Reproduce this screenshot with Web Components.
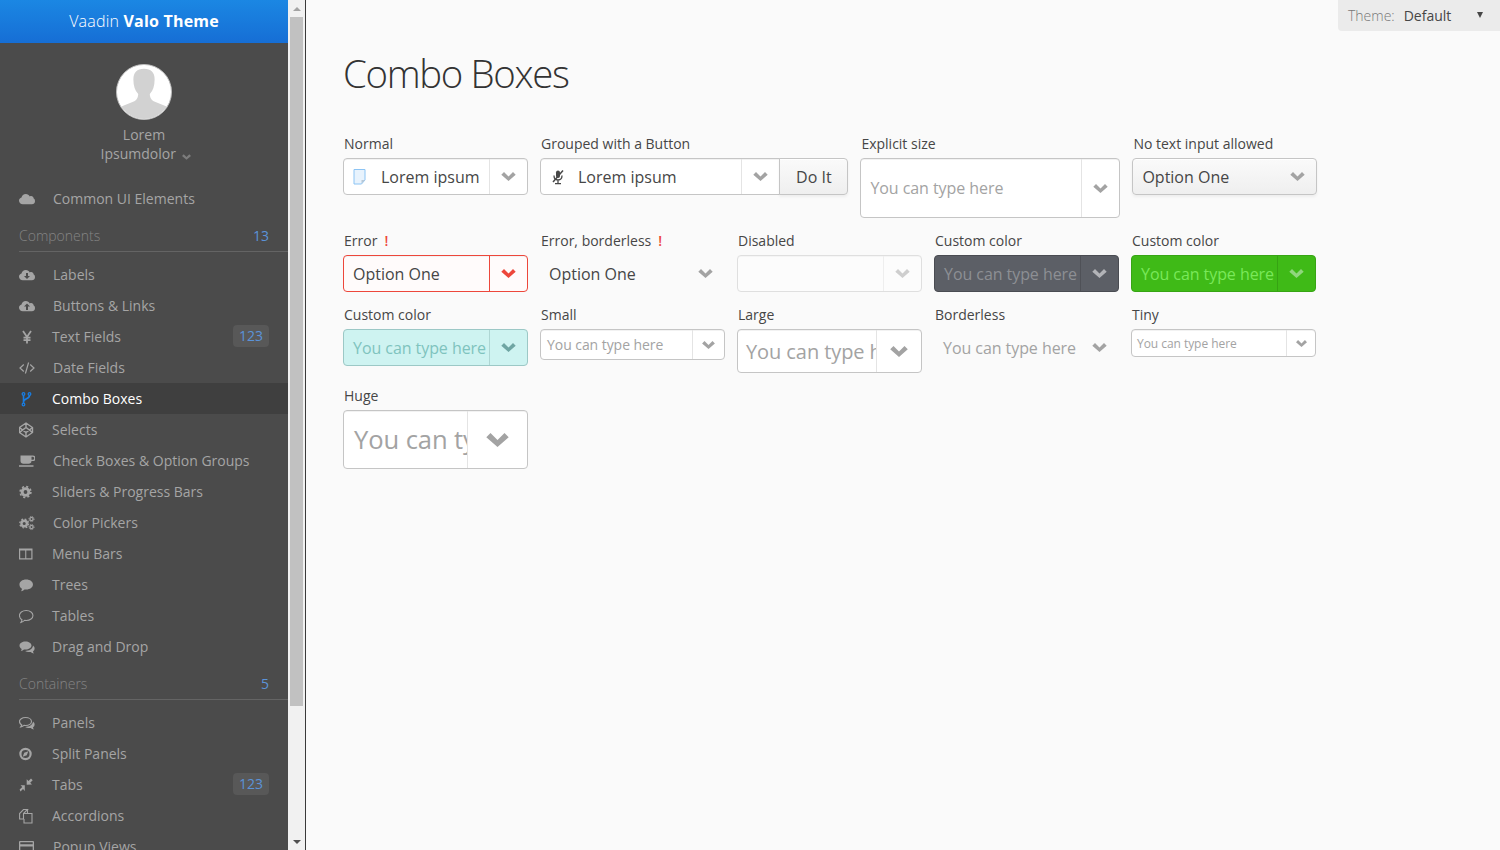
<!DOCTYPE html>
<html>
<head>
<meta charset="utf-8">
<title>Combo Boxes</title>
<style>
  html, body { margin: 0; height: 100%; overflow: hidden; }
  body { font-family: "Open Sans", sans-serif; background: #fafafa; color: #464646; }
</style>
</head>
<body>
<valo-app>
  <valo-menu slot="menu">
    <menu-item icon="cloud">Common UI Elements</menu-item>
    <menu-section count="13">Components</menu-section>
    <menu-item icon="cloud-download">Labels</menu-item>
    <menu-item icon="cloud-upload">Buttons &amp; Links</menu-item>
    <menu-item icon="yen" narrow badge="123">Text Fields</menu-item>
    <menu-item icon="code">Date Fields</menu-item>
    <menu-item icon="fork" narrow selected>Combo Boxes</menu-item>
    <menu-item icon="codepen" narrow>Selects</menu-item>
    <menu-item icon="coffee">Check Boxes &amp; Option Groups</menu-item>
    <menu-item icon="cog" narrow>Sliders &amp; Progress Bars</menu-item>
    <menu-item icon="cogs">Color Pickers</menu-item>
    <menu-item icon="columns" narrow>Menu Bars</menu-item>
    <menu-item icon="comment" narrow>Trees</menu-item>
    <menu-item icon="comment-o" narrow>Tables</menu-item>
    <menu-item icon="comments" narrow>Drag and Drop</menu-item>
    <menu-section count="5">Containers</menu-section>
    <menu-item icon="comments-o" narrow>Panels</menu-item>
    <menu-item icon="compass" narrow>Split Panels</menu-item>
    <menu-item icon="compress" narrow badge="123">Tabs</menu-item>
    <menu-item icon="copy" narrow>Accordions</menu-item>
    <menu-item icon="card">Popup Views</menu-item>
  </valo-menu>
  <fake-scrollbar slot="menu"></fake-scrollbar>
  <theme-select></theme-select>
  <h1 slot="title">Combo Boxes</h1>
  <combo-field label="Normal" value="Lorem ipsum" icon="file"></combo-field>
  <combo-field label="Grouped with a Button" value="Lorem ipsum" icon="mic" grouped></combo-field>
  <combo-field label="Explicit size" placeholder="You can type here" style="--w:260px;--h:60px"></combo-field>
  <combo-field label="No text input allowed" value="Option One" variant="notext"></combo-field>
  <combo-field label="Error" error value="Option One" variant="error"></combo-field>
  <combo-field label="Error, borderless" error value="Option One" variant="borderless"></combo-field>
  <combo-field label="Disabled" variant="disabled"></combo-field>
  <combo-field label="Custom color" placeholder="You can type here" variant="dark"></combo-field>
  <combo-field label="Custom color" placeholder="You can type here" variant="green"></combo-field>
  <combo-field label="Custom color" placeholder="You can type here" variant="teal"></combo-field>
  <combo-field label="Small" placeholder="You can type here" size="small"></combo-field>
  <combo-field label="Large" placeholder="You can type here" size="large"></combo-field>
  <combo-field label="Borderless" placeholder="You can type here" variant="borderless"></combo-field>
  <combo-field label="Tiny" placeholder="You can type here" size="tiny"></combo-field>
  <combo-field label="Huge" placeholder="You can type here" size="huge"></combo-field>
</valo-app>

<script>
// Gear drawn as a ring plus a dashed ring for the teeth
function gear(cx, cy, r) {
  const c = 2 * Math.PI * r, d = c / 16;
  return `<circle cx="${cx}" cy="${cy}" r="${r * 0.62}" fill="none" stroke="currentColor" stroke-width="${r * 0.54}"/>` +
    `<circle cx="${cx}" cy="${cy}" r="${r}" fill="none" stroke="currentColor" stroke-width="${r * 0.3}" stroke-dasharray="${d} ${d}"/>`;
}

const CLOUD = 'M3.8 13.2C1.7 13.2 0 11.7 0 9.8c0-1.5 1-2.8 2.5-3.2C2.8 4.5 4.6 3 6.8 3c1.8 0 3.3 1 4 2.4.4-.2.8-.3 1.3-.3 1.4 0 2.5 1 2.6 2.4 1 .5 1.3 1.5 1.3 2.7 0 1.7-1.4 3-3.1 3z';
const BUBBLE = 'M8 2.5c4.4 0 7.5 2.2 7.5 5s-3.1 5-7.5 5c-.6 0-1.2 0-1.8-.1-1 .8-2.4 1.6-4 1.9.5-.7 1-1.6 1.1-2.6C1.5 10.8.5 9.2.5 7.5c0-2.8 3.1-5 7.5-5z';
const SMALL_BUBBLE = 'M6.5 2.5c3.4 0 6 1.7 6 4s-2.6 4-6 4c-.5 0-1 0-1.5-.1-.8.7-1.9 1.2-3.2 1.5.4-.6.8-1.2.9-2C1.1 9 .5 7.8.5 6.5c0-2.3 2.6-4 6-4z';
const SECOND_BUBBLE = 'M14 6.500c1 .8 1.600 1.800 1.600 2.900 0 1.200-.6 2.200-1.600 3 .1.800.4 1.400.9 2-1.300-.2-2.400-.8-3.200-1.500-.5.100-1 .1-1.500.1-1.600 0-3-.4-4-1.100 3.800 0 7.600-1.800 7.800-5.400z';

const ICONS = {
  cloud: `<path fill="currentColor" d="${CLOUD}"/>`,
  'cloud-download': `<path fill="currentColor" fill-rule="evenodd" d="${CLOUD}M7 6v3H5l3 3 3-3H9V6z"/>`,
  'cloud-upload': `<path fill="currentColor" fill-rule="evenodd" d="${CLOUD}M8 5.500l-3 3h2V12h2V8.500h2z"/>`,
  yen: `<path fill="none" stroke="currentColor" stroke-width="1.800" d="M4 2l4 6 4-6M8 8v6.500M4.500 8.700h7M4.500 11.200h7"/>`,
  code: `<path fill="none" stroke="currentColor" stroke-width="1.200" d="M4.800 4.500L1 8l3.800 3.500M11.200 4.500L15 8l-3.800 3.500M9.600 2.500L6.400 13.500"/>`,
  fork: `<g fill="none" stroke="currentColor" stroke-width="1.300"><circle cx="4.500" cy="3" r="1.300"/><circle cx="4.500" cy="13.500" r="1.300"/><circle cx="10.500" cy="3" r="1.300"/><path stroke-width="1.600" d="M4.500 4.500v7.500M10.500 4.500c0 4-6 2.500-6 6.500"/></g>`,
  codepen: `<path fill="none" stroke="currentColor" stroke-width="1.400" d="M7 1l6.500 4.500v5L7 15 .5 10.500v-5zM7 1v4.500M7 15v-4.500M.5 5.500l6.500 5 6.500-5M.5 10.500l6.500-5 6.500 5"/>`,
  coffee: `<path fill="currentColor" fill-rule="evenodd" d="M1.500 2.500h12.300a2.200 2.200 0 0 1 0 5.500h-1.300a3 3 0 0 1-3 2.800h-5a3 3 0 0 1-3-2.800zM12.500 3.800v3h1.200a1.500 1.500 0 0 0 0-3zM0 12.300h14.500v1.500H0z"/>`,
  cog: gear(6.5, 8, 5.400),
  cogs: gear(5.2, 8.500, 4.400) +
    `<g transform="translate(12.500 4)"><circle r="1.600" fill="none" stroke="currentColor" stroke-width="1.300"/><circle r="2.600" fill="none" stroke="currentColor" stroke-width="1" stroke-dasharray="1 1.040"/></g>` +
    `<g transform="translate(12.500 12)"><circle r="1.600" fill="none" stroke="currentColor" stroke-width="1.300"/><circle r="2.600" fill="none" stroke="currentColor" stroke-width="1" stroke-dasharray="1 1.040"/></g>`,
  columns: `<path fill="currentColor" fill-rule="evenodd" d="M0 2.500h13.500v11H0zM1.200 4.500v7.800h5v-7.800zM7.300 4.500v7.800h5v-7.800z"/>`,
  comment: `<path fill="currentColor" d="${BUBBLE}" transform="scale(.9 1)"/>`,
  'comment-o': `<path fill="none" stroke="currentColor" stroke-width="1.200" d="${BUBBLE}" transform="scale(.9 1)"/>`,
  comments: `<path fill="currentColor" d="${SMALL_BUBBLE}"/><path fill="currentColor" d="${SECOND_BUBBLE}"/>`,
  'comments-o': `<path fill="none" stroke="currentColor" stroke-width="1.200" d="${SMALL_BUBBLE}"/><path fill="currentColor" d="${SECOND_BUBBLE}"/>`,
  compass: `<path fill="currentColor" fill-rule="evenodd" d="M6.500 1.800a6.200 6.200 0 1 1 0 12.400 6.200 6.200 0 0 1 0-12.400zM6.500 4a4 4 0 1 0 0 8 4 4 0 0 0 0-8z"/><path fill="currentColor" d="M9.300 5.200L7.800 9.300 3.700 10.800l1.500-4.100z"/>`,
  compress: `<path fill="currentColor" d="M7.700 7.800V2.200l1.800 1.800 2.500-2.500 1.700 1.700-2.500 2.500 1.800 1.800zM5.800 8.300v5.600L4 12.100 1.500 14.600 .6 12.400l2.700-2.300-1.800-1.800z"/>`,
  copy: `<g fill="none" stroke="currentColor" stroke-width="1.100"><path d="M4.500 1.500h4l-4 4v5.500H.6V5.500z"/><path d="M8.500 1.500v4h-4"/><path d="M8.500 5.500h4.500v9.500H5v-4"/></g>`,
  card: `<path fill="currentColor" fill-rule="evenodd" d="M1 2h13a1 1 0 0 1 1 1v11H0V3a1 1 0 0 1 1-1zM1.300 7.500v5.200h12.400V7.500zM1.300 3.300v2h12.400v-2z"/>`,
  file: `<path fill="#e8f3fd" stroke="#8cc4f4" stroke-width="1" d="M1 .5h11v10.500l-3.500 4H1z"/><path fill="#b8c8d6" d="M8.500 14.500v-3.500H12z"/>`,
  mic: `<g fill="none" stroke="#464646"><path stroke-width="4" stroke-linecap="round" d="M8 3.500v3.500"/><path stroke-width="1.300" d="M4 6.500c0 6 8 6 8 0M8 11.500v3M5 14.700h6"/><path stroke-width="1.500" d="M13 1.500L3 13"/></g>`
};

function svg(name, size) {
  return `<svg width="${size}" height="${size}" viewBox="0 0 16 16" aria-hidden="true">${ICONS[name] || ''}</svg>`;
}

class ValoApp extends HTMLElement {
  constructor() {
    super();
    this.attachShadow({ mode: 'open' });
    this.shadowRoot.innerHTML = `
      <style>
        :host { display: flex; height: 100vh; overflow: hidden; position: relative; }
        .side { flex: 0 0 305px; display: flex; height: 100%; overflow: hidden; }
        .divider { flex: 0 0 1px; background: #3a3a3a; }
        main { flex: 1; min-width: 0; padding: 0 37px; background: #fafafa; }
        ::slotted(h1) {
          font-family: "Open Sans", sans-serif; font-weight: 300; font-size: 38.4px; line-height: 48px;
          letter-spacing: -.035em; color: #333; margin: 49px 0 37px;
        }
        .form { display: flex; flex-wrap: wrap; gap: 13px 12px; width: 988px; align-items: flex-start; }
      </style>
      <div class="side"><slot name="menu"></slot></div>
      <div class="divider"></div>
      <main>
        <slot name="title"></slot>
        <div class="form"><slot></slot></div>
      </main>
      <slot name="overlay"></slot>`;
  }
}

class ValoMenu extends HTMLElement {
  constructor() {
    super();
    this.attachShadow({ mode: 'open' });
    this.shadowRoot.innerHTML = `
      <style>
        :host { display: block; flex: 0 0 288px; width: 288px; height: 100%; overflow: hidden; background: #4b4b4b; }
        header {
          height: 43px; line-height: 42px; text-align: center; color: #fff; font-size: 16px; font-weight: 300; letter-spacing: .2px;
          background: linear-gradient(to bottom, #1b87e3 0%, #166ed5 100%);
        }
        header b { font-weight: 700; }
        .user { padding: 21px 0 0 0; height: 140px; box-sizing: border-box; text-align: center; color: #a5a5a5; font-size: 14px; line-height: 19px; }
        .user svg.pic { display: block; margin: 0 auto 5px; }
        .user .line { padding-left: 3px; }
        .user svg.car { vertical-align: -1px; margin-left: 2px; color: #7c7c7c; }
      </style>
      <header>Vaadin <b>Valo Theme</b></header>
      <div class="user">
        <svg class="pic" width="56" height="56" viewBox="0 0 58 58">
          <defs><clipPath id="c"><circle cx="29" cy="29" r="28"/></clipPath></defs>
          <circle cx="29" cy="29" r="28.500" fill="#fff" stroke="#bdbdbd" stroke-width="1"/>
          <path clip-path="url(#c)" fill="#d2d2d2" d="M3 45l16-6.500q4-2 4-7.500-5-5-5-15 0-11 11-11 11 0 11 11 0 10-5 15 0 5.500 4 7.500l16 6.500v13H3z"/>
        </svg>
        Lorem<div class="line">Ipsumdolor <svg class="car" width="9" height="6" viewBox="0 0 16 10"><path fill="currentColor" d="M0 3l3-3 5 5 5-5 3 3-8 7z"/></svg></div>
      </div>
      <slot></slot>`;
  }
}

class MenuItem extends HTMLElement {
  constructor() {
    super();
    this.attachShadow({ mode: 'open' });
  }
  connectedCallback() {
    const badge = this.getAttribute('badge');
    this.shadowRoot.innerHTML = `
      <style>
        :host { display: flex; align-items: center; height: 31px; padding: 0 19px; font-size: 14px; color: #a5a5a5; }
        :host([selected]) { background: #3f3f3f; color: #fff; font-weight: 400; }
        .icon { flex: 0 0 34px; display: flex; align-items: center; color: #a5a5a5; }
        :host([narrow]) .icon { flex-basis: 33px; }
        :host([selected]) .icon { color: #197de1; }
        .label { flex: 1; }
        .badge { height: 22px; line-height: 21px; padding: 0 6px; border-radius: 4px; background: #585858; color: #5b93d8; font-size: 14px; margin-top: -2px; }
      </style>
      <span class="icon">${svg(this.getAttribute('icon'), 16)}</span>
      <span class="label"><slot></slot></span>
      ${badge ? `<span class="badge">${badge}</span>` : ''}`;
  }
}

class MenuSection extends HTMLElement {
  constructor() {
    super();
    this.attachShadow({ mode: 'open' });
  }
  connectedCallback() {
    this.shadowRoot.innerHTML = `
      <style>
        :host { display: block; margin: 0 0 7px 19px; }
        .row {
          display: flex; justify-content: space-between; align-items: center; height: 38px; padding: 6px 19px 0 0;
          box-sizing: border-box; border-bottom: 1px solid #646464;
          font-size: 14px; font-weight: 300; color: #848484;
        }
        .n { color: #5b93d8; font-weight: 400; }
      </style>
      <div class="row"><span><slot></slot></span><span class="n">${this.getAttribute('count')}</span></div>`;
  }
}

class FakeScrollbar extends HTMLElement {
  constructor() {
    super();
    this.attachShadow({ mode: 'open' });
    this.shadowRoot.innerHTML = `
      <style>
        :host { flex: 0 0 17px; height: 100%; background: #f1f1f1; display: flex; flex-direction: column; align-items: center; }
        .arrow { flex: 0 0 17px; display: flex; align-items: center; justify-content: center; }
        .up { width: 0; height: 0; border: 4px solid transparent; border-top: 0; border-bottom: 4px solid #a3a3a3; }
        .down { width: 0; height: 0; border: 4px solid transparent; border-bottom: 0; border-top: 4px solid #505050; }
        .thumb { flex: 0 0 689px; width: 13px; background: #c1c1c1; }
        .rest { flex: 1; }
      </style>
      <div class="arrow"><div class="up"></div></div>
      <div class="thumb"></div>
      <div class="rest"></div>
      <div class="arrow"><div class="down"></div></div>`;
  }
}

class ThemeSelect extends HTMLElement {
  constructor() {
    super();
    this.attachShadow({ mode: 'open' });
    this.shadowRoot.innerHTML = `
      <style>
        :host {
          position: absolute; top: 0; right: 0; width: 152px; height: 31px; padding-left: 10px;
          display: flex; align-items: center; background: #ebebeb; border-bottom-left-radius: 4px;
          font-size: 14px; color: #464646;
        }
        .cap { color: #787878; font-weight: 300; margin-right: 9px; }
        .tri { position: absolute; left: 139px; top: 12px; width: 0; height: 0; border: 3.500px solid transparent; border-bottom: 0; border-top: 6px solid #464646; }
      </style>
      <span class="cap">Theme:</span><span>Default</span><span class="tri"></span>`;
  }
}

class ComboField extends HTMLElement {
  constructor() {
    super();
    this.attachShadow({ mode: 'open' });
  }
  connectedCallback() {
    const a = (n) => this.getAttribute(n);
    const value = a('value'), ph = a('placeholder');
    const icon = a('icon');
    const chevSize = { small: 13, large: 18, tiny: 11, huge: 23 }[a('size')] || 15;
    this.shadowRoot.innerHTML = `
      <style>
        :host { display: block; --h: 37px; --fs: 16px; --btn: 38px; --pad: 9px; --w: 185px; width: var(--w); }
        :host([grouped]) { --w: 308.4px; }
        :host([size="small"]) { --h: 31px; --fs: 14px; --btn: 32px; --pad: 6px; }
        :host([size="large"]) { --h: 44px; --fs: 20px; --btn: 45px; --pad: 8px; }
        :host([size="tiny"]) { --h: 28px; --fs: 12px; --btn: 29px; --pad: 5px; }
        :host([size="huge"]) { --h: 59px; --fs: 25.6px; --btn: 60px; --pad: 10px; }
        :host([variant="borderless"]) { --pad: 8px; }
        .cap { height: 24px; line-height: 20px; font-size: 14px; padding-left: 1px; color: #464646; white-space: nowrap; }
        .cap i { font-style: normal; color: #ed473b; margin-left: 7px; font-weight: 600; }
        .row { display: flex; height: var(--h); }
        .box {
          flex: 1; min-width: 0; display: flex; box-sizing: border-box; height: var(--h); background: #fff;
          border: 1px solid #c5c5c5; border-radius: 4px; color: #464646; overflow: hidden;
          box-shadow: inset 0 1px 0 #f2f2f2, 0 1px 0 rgba(255,255,255,.1);
          font-size: var(--fs);
        }
        .text {
          flex: 1; min-width: 0; overflow: hidden; white-space: nowrap; padding-left: var(--pad);
          display: flex; align-items: center;
        }
        .text .ph { color: #a3a3a3; letter-spacing: -.004em; }
        .text svg { flex: 0 0 16px; margin-right: 12px; }
        .btn {
          flex: 0 0 var(--btn); box-sizing: border-box; display: flex; align-items: center; justify-content: center;
          border-left: 1px solid #e4e4e4; color: #a3a3a3;
        }
        .do {
          flex: 0 0 69px; box-sizing: border-box; height: var(--h); margin-left: -1px; display: flex; align-items: center; justify-content: center;
          border: 1px solid #c5c5c5; border-radius: 0 4px 4px 0; font-size: 16px; color: #464646;
          background: linear-gradient(to bottom, #fafafa 2%, #efefef 98%);
          box-shadow: inset 0 1px 0 #fff, 0 2px 3px rgba(0,0,0,.05);
        }
        :host([grouped]) .box { border-radius: 4px 0 0 4px; }

        :host([variant="notext"]) .box { background: linear-gradient(to bottom, #fafafa 2%, #efefef 98%); box-shadow: inset 0 1px 0 #fff, 0 2px 3px rgba(0,0,0,.05); }
        :host([variant="notext"]) .btn { border-left: 0; }
        :host([variant="error"]) .box { border-color: #ed473b; background: #fffbfb; }
        :host([variant="error"]) .btn { border-left-color: #ed473b; color: #ed473b; }
        :host([variant="borderless"]) .box { background: transparent; border-color: transparent; box-shadow: none; }
        :host([variant="borderless"]) .btn { border-left-color: transparent; }
        :host([variant="disabled"]) .box { opacity: .5; }
        :host([variant="dark"]) .box { background: #5c5f66; border-color: #4a4c52; box-shadow: none; }
        :host([variant="dark"]) .btn { border-left-color: #4f5157; color: #b2b3b7; }
        :host([variant="dark"]) .ph { color: #8d8f94; }
        :host([variant="green"]) .box { background: #3fba17; border-color: #37a514; box-shadow: none; }
        :host([variant="green"]) .btn { border-left-color: #36a313; color: #90d67d; }
        :host([variant="green"]) .ph { color: #7ae85a; }
        :host([variant="teal"]) .box { background: #cef3f1; border-color: #9cc8c6; box-shadow: none; }
        :host([variant="teal"]) .btn { border-left-color: #aed6d4; color: #6fa5a3; }
        :host([variant="teal"]) .ph { color: #7fc3be; }
      </style>
      <div class="cap">${a('label')}${this.hasAttribute('error') ? '<i>!</i>' : ''}</div>
      <div class="row">
        <div class="box">
          <div class="text">${icon ? svg(icon, 16) : ''}${value ? `<span>${value}</span>` : ''}${ph ? `<span class="ph">${ph}</span>` : ''}</div>
          <div class="btn"><svg width="${chevSize}" height="${Math.round(chevSize * 0.62)}" viewBox="0 0 16 10"><path fill="currentColor" d="M0 3l3-3 5 5 5-5 3 3-8 7z"/></svg></div>
        </div>
        ${this.hasAttribute('grouped') ? '<div class="do">Do It</div>' : ''}
      </div>`;
  }
}

customElements.define('valo-app', ValoApp);
customElements.define('valo-menu', ValoMenu);
customElements.define('menu-item', MenuItem);
customElements.define('menu-section', MenuSection);
customElements.define('fake-scrollbar', FakeScrollbar);
customElements.define('theme-select', ThemeSelect);
customElements.define('combo-field', ComboField);
</script>
</body>
</html>
